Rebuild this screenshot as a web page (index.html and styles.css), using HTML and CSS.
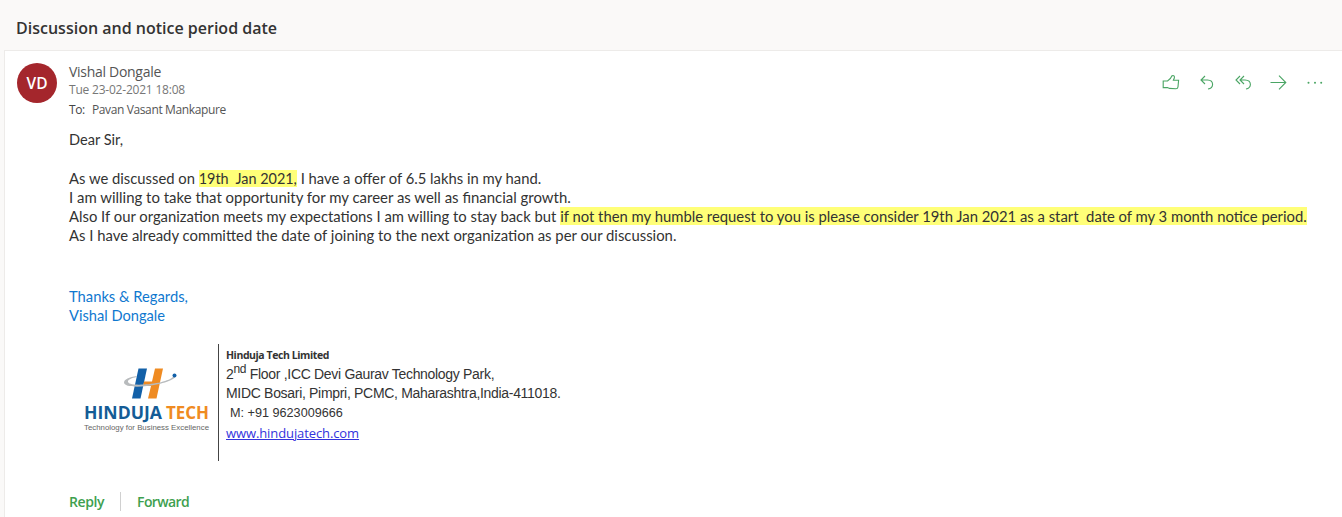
FILE: index.html
```html
<!DOCTYPE html>
<html lang="en">
<head>
<meta charset="utf-8">
<title>Discussion and notice period date</title>
<link rel="stylesheet" href="styles.css">
</head>
<body>
<header class="subject"><h1>Discussion and notice period date</h1></header>
<main class="message">
  <div class="message-head">
    <div class="avatar">VD</div>
    <div class="meta">
      <div class="sender">Vishal Dongale</div>
      <div class="date">Tue 23-02-2021 18:08</div>
      <div class="to"><span class="to-label">To:</span><span>Pavan Vasant Mankapure</span></div>
    </div>
    <div class="actions">
      <svg class="icon" viewBox="0 0 20 20"><path d="M2.2 8H6.5Q9.8 6 11 2.8Q13.8 2 13.4 4.8L12.4 7.2H17.6L17 13.8Q16.7 15.8 15 15.8L8.5 15.4L6.5 14.6H2.2Z"/></svg>
      <svg class="icon" viewBox="0 0 20 20"><path d="M8 3L4 7L8 11M4 7H10.5Q15.6 7.2 15.6 11.5Q15.4 15.3 11 16"/></svg>
      <svg class="icon" viewBox="0 0 20 20"><path d="M7 3L3 7L7 11M11 3L7 7L11 11M7 7H12Q17.4 7.2 17.4 11.5Q17.2 15.3 13 16"/></svg>
      <svg class="icon" viewBox="0 0 20 20"><path d="M1.5 9.5H16.8M10 2.6L16.8 9.5L10 16.4"/></svg>
      <svg class="icon dots" viewBox="0 0 20 20"><circle cx="3.5" cy="9.7" r="1"/><circle cx="10" cy="9.7" r="1"/><circle cx="16.2" cy="9.7" r="1"/></svg>
    </div>
  </div>
  <div class="body">
    <p class="greeting">Dear Sir,</p>
    <p class="gap"></p>
    <p class="offer">As we discussed on <mark>19th&nbsp; Jan 2021,</mark> I have a offer of 6.5 lakhs in my hand.</p>
    <p class="career">I am willing to take that opportunity for my career as well as financial growth.</p>
    <p class="request">Also If our organization meets my expectations I am willing to stay back but <mark>if not then my humble request to you is please consider 19th Jan 2021 as a start&nbsp; date of my 3 month notice period.</mark></p>
    <p class="joining">As I have already committed the date of joining to the next organization as per our discussion.</p>
  </div>
  <div class="regards">
    <p>Thanks &amp; Regards,</p>
    <p class="signer">Vishal Dongale</p>
  </div>
  <div class="signature">
    <svg class="logo" viewBox="0 0 149 117">
      <path class="h-blue" d="M69.5 24.5H78L71.5 54.5H63Z"/>
      <path class="h-orange" d="M86 24.5H94L87.5 54.5H79L82 42H74L75 37.5H83Z"/>
      <path class="ring" d="M68 32C60 33 55 35.500 55 38.500C55 42.500 66 43.500 78 42C93 40.500 107 35.500 106.500 32C105 30.500 104 31 104.500 32C103 36 88 40 75 40.500C64 41 59 40 59 37.500C59 35.500 63 34 67.500 33Z"/>
      <circle class="h-blue" cx="105.500" cy="31.500" r="2"/>
      <text class="brand" x="15" y="75" textLength="78" lengthAdjust="spacingAndGlyphs">HINDUJA</text>
      <text class="brand tech" x="97" y="75" textLength="43" lengthAdjust="spacingAndGlyphs">TECH</text>
      <text class="tagline" x="15" y="86" textLength="125" lengthAdjust="spacingAndGlyphs">Technology for Business Excellence</text>
    </svg>
    <address class="contact">
      <p class="company">Hinduja Tech Limited</p>
      <p class="street">2<sup>nd</sup> Floor ,ICC Devi Gaurav Technology Park,</p>
      <p class="city">MIDC Bosari, Pimpri, PCMC, Maharashtra,India-411018.</p>
      <p class="phone">M: +91 9623009666</p>
      <p class="site"><a>www.hindujatech.com</a></p>
    </address>
  </div>
  <footer class="reply-bar"><span>Reply</span><i class="divider"></i><span class="forward">Forward</span></footer>
</main>
</body>
</html>
```
FILE: styles.css
```css
* { box-sizing: border-box; }
body { margin: 0; height: 517px; overflow: hidden; background: #faf9f8; color: #333; font-family: "Open Sans", sans-serif; }
h1, p { margin: 0; }
.subject { height: 50px; padding: 16px 16px 0; }
.subject h1 { font: 600 16px/24px "Open Sans", sans-serif; }
.message { height: 467px; margin-left: 4px; background: #fff; border: 1px solid #edebe9; border-width: 1px 0 0 1px; }
.message-head { display: flex; padding: 12px 17px 0 12px; height: 79px; }
.avatar { width: 40px; height: 40px; border-radius: 50%; background: #a4262c; color: #fff; font: 600 15.5px/41px "Open Sans", sans-serif; text-align: center; }
.meta { margin-left: 12px; white-space: nowrap; }
.sender { font-size: 14px; letter-spacing: -0.29px; line-height: 17px; color: #555; }
.date { font-size: 12px; letter-spacing: -0.21px; line-height: 19px; color: #777; }
.to { font-size: 12px; letter-spacing: -0.37px; line-height: 21px; color: #555; }
.to-label { margin-right: 7px; color: #444; }
.actions { display: flex; gap: 16px; margin-left: auto; padding-top: 10px; }
.icon { width: 20px; height: 20px; fill: none; stroke: #4aa564; stroke-width: 1.1; }
.dots { fill: #4aa564; stroke: none; }
.body, .regards { padding-left: 64px; font: 14.75px/19.2px Lato, sans-serif; white-space: nowrap; }
.gap { height: 19.4px; }
mark { color: inherit; background: #ffff78; }
.greeting { font-size: 14.6px; }
.offer { font-size: 14.8px; }
.offer mark { font-size: 14.4px; }
.career { font-size: 14.95px; }
.request { font-size: 14.82px; }
.request mark { font-size: 14.84px; }
.joining { font-size: 14.87px; }
.regards { margin-top: 41.6px; color: #0f78cf; }
.signer { font-size: 14.65px; }
.signature { display: flex; margin: 18.6px 0 0 64px; height: 117px; }
.logo { width: 150px; height: 117px; border-right: 1px solid #444; }
.ring { fill: #b8bbbd; }
.h-blue { fill: #1260a8; }
.h-orange { fill: #ef8b22; }
.brand { font: 700 17px "Open Sans", sans-serif; fill: #145c96; }
.tech { fill: #ef8b22; }
.tagline { font: 7.5px "Liberation Sans", sans-serif; fill: #666; }
.contact { padding: 2px 0 0 7px; font: 14px/19px "Liberation Sans", sans-serif; letter-spacing: -0.31px; white-space: nowrap; }
.company { font: 700 10.5px/19px "Open Sans", sans-serif; letter-spacing: -0.42px; }
sup { font-size: 12px; line-height: 0; }
.phone { font-size: 12.65px; letter-spacing: 0; padding-left: 4px; line-height: 20px; }
.site { font: 13px/20px "Open Sans", sans-serif; letter-spacing: -0.1px; color: #33d; text-decoration: underline; }
.reply-bar { display: flex; align-items: center; margin: 30px 0 0 64px; height: 20px; font-size: 14px; letter-spacing: -0.42px; font-weight: 600; color: #3ea04f; }
.forward { letter-spacing: -0.6px; }
.divider { width: 1px; height: 19px; margin: 0 16px; background: #d0d0d0; }
```
